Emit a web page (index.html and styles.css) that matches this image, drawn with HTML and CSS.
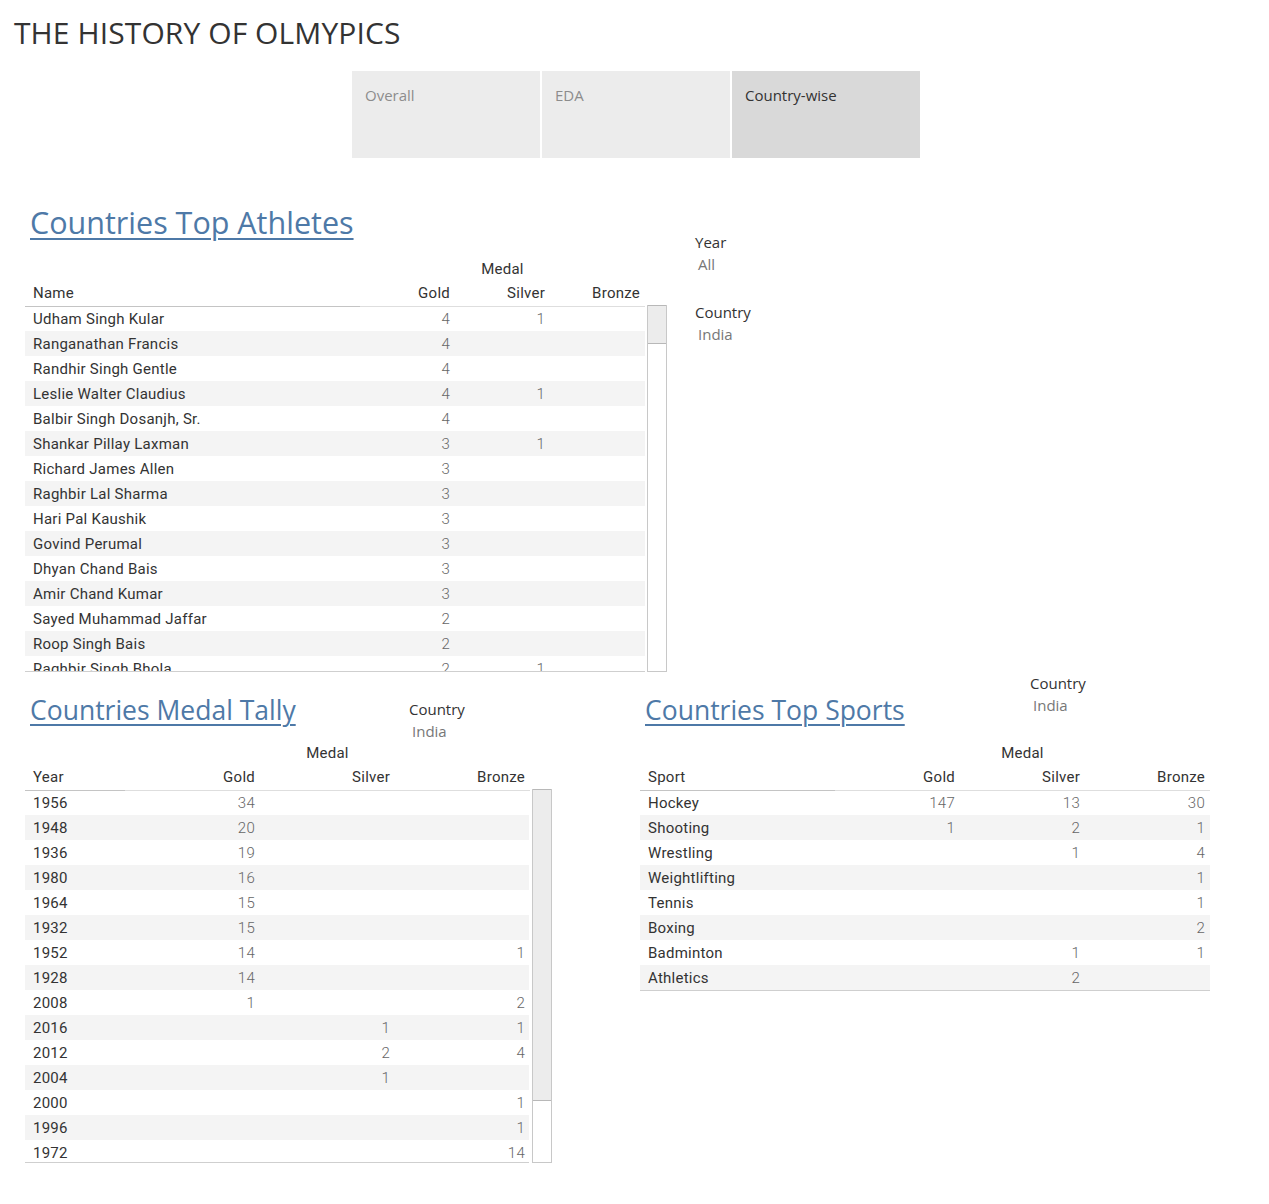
FILE: index.html
```html
<!DOCTYPE html>
<html lang="en">
<head>
<meta charset="utf-8">
<title>The History of Olympics</title>
<link rel="stylesheet" href="styles.css">
</head>
<body>
<header class="title">THE HISTORY OF OLMYPICS</header>
<nav class="tabs">
  <div class="tab">Overall</div>
  <div class="tab">EDA</div>
  <div class="tab active">Country-wise</div>
</nav>

<section class="top">
  <div class="athletes">
    <h2 class="heading big">Countries Top Athletes</h2>
    <div class="grid ath-cols medal-row"><span></span><span class="medal">Medal</span></div>
    <div class="grid ath-cols head-row">
      <span class="hc first">Name</span><span class="hc num">Gold</span><span class="hc num">Silver</span><span class="hc num">Bronze</span>
    </div>
    <div class="body-wrap">
      <div class="tbody ath-body">
        <div class="grid ath-cols row"><span class="c">Udham Singh Kular</span><span class="n">4</span><span class="n">1</span><span class="n"></span></div>
        <div class="grid ath-cols row"><span class="c">Ranganathan Francis</span><span class="n">4</span><span class="n"></span><span class="n"></span></div>
        <div class="grid ath-cols row"><span class="c">Randhir Singh Gentle</span><span class="n">4</span><span class="n"></span><span class="n"></span></div>
        <div class="grid ath-cols row"><span class="c">Leslie Walter Claudius</span><span class="n">4</span><span class="n">1</span><span class="n"></span></div>
        <div class="grid ath-cols row"><span class="c">Balbir Singh Dosanjh, Sr.</span><span class="n">4</span><span class="n"></span><span class="n"></span></div>
        <div class="grid ath-cols row"><span class="c">Shankar Pillay Laxman</span><span class="n">3</span><span class="n">1</span><span class="n"></span></div>
        <div class="grid ath-cols row"><span class="c">Richard James Allen</span><span class="n">3</span><span class="n"></span><span class="n"></span></div>
        <div class="grid ath-cols row"><span class="c">Raghbir Lal Sharma</span><span class="n">3</span><span class="n"></span><span class="n"></span></div>
        <div class="grid ath-cols row"><span class="c">Hari Pal Kaushik</span><span class="n">3</span><span class="n"></span><span class="n"></span></div>
        <div class="grid ath-cols row"><span class="c">Govind Perumal</span><span class="n">3</span><span class="n"></span><span class="n"></span></div>
        <div class="grid ath-cols row"><span class="c">Dhyan Chand Bais</span><span class="n">3</span><span class="n"></span><span class="n"></span></div>
        <div class="grid ath-cols row"><span class="c">Amir Chand Kumar</span><span class="n">3</span><span class="n"></span><span class="n"></span></div>
        <div class="grid ath-cols row"><span class="c">Sayed Muhammad Jaffar</span><span class="n">2</span><span class="n"></span><span class="n"></span></div>
        <div class="grid ath-cols row"><span class="c">Roop Singh Bais</span><span class="n">2</span><span class="n"></span><span class="n"></span></div>
        <div class="grid ath-cols row"><span class="c">Raghbir Singh Bhola</span><span class="n">2</span><span class="n">1</span><span class="n"></span></div>
      </div>
      <div class="scroll ath-scroll"><div class="thumb ath-thumb"></div></div>
    </div>
  </div>

  <aside class="filters">
    <div class="filter">
      <div class="f-label">Year</div>
      <div class="f-value">All</div>
    </div>
    <div class="filter">
      <div class="f-label">Country</div>
      <div class="f-value">India</div>
    </div>
  </aside>
</section>

<section class="bottom">
  <div class="tally">
    <div class="block-head tally-head">
      <h2 class="heading">Countries Medal Tally</h2>
      <div class="filter tally-filter">
        <div class="f-label">Country</div>
        <div class="f-value">India</div>
      </div>
    </div>
    <div class="grid tally-cols medal-row"><span></span><span class="medal">Medal</span></div>
    <div class="grid tally-cols head-row">
      <span class="hc first">Year</span><span class="hc num">Gold</span><span class="hc num">Silver</span><span class="hc num">Bronze</span>
    </div>
    <div class="body-wrap">
      <div class="tbody tally-body">
        <div class="grid tally-cols row"><span class="c">1956</span><span class="n">34</span><span class="n"></span><span class="n"></span></div>
        <div class="grid tally-cols row"><span class="c">1948</span><span class="n">20</span><span class="n"></span><span class="n"></span></div>
        <div class="grid tally-cols row"><span class="c">1936</span><span class="n">19</span><span class="n"></span><span class="n"></span></div>
        <div class="grid tally-cols row"><span class="c">1980</span><span class="n">16</span><span class="n"></span><span class="n"></span></div>
        <div class="grid tally-cols row"><span class="c">1964</span><span class="n">15</span><span class="n"></span><span class="n"></span></div>
        <div class="grid tally-cols row"><span class="c">1932</span><span class="n">15</span><span class="n"></span><span class="n"></span></div>
        <div class="grid tally-cols row"><span class="c">1952</span><span class="n">14</span><span class="n"></span><span class="n">1</span></div>
        <div class="grid tally-cols row"><span class="c">1928</span><span class="n">14</span><span class="n"></span><span class="n"></span></div>
        <div class="grid tally-cols row"><span class="c">2008</span><span class="n">1</span><span class="n"></span><span class="n">2</span></div>
        <div class="grid tally-cols row"><span class="c">2016</span><span class="n"></span><span class="n">1</span><span class="n">1</span></div>
        <div class="grid tally-cols row"><span class="c">2012</span><span class="n"></span><span class="n">2</span><span class="n">4</span></div>
        <div class="grid tally-cols row"><span class="c">2004</span><span class="n"></span><span class="n">1</span><span class="n"></span></div>
        <div class="grid tally-cols row"><span class="c">2000</span><span class="n"></span><span class="n"></span><span class="n">1</span></div>
        <div class="grid tally-cols row"><span class="c">1996</span><span class="n"></span><span class="n"></span><span class="n">1</span></div>
        <div class="grid tally-cols row"><span class="c">1972</span><span class="n"></span><span class="n"></span><span class="n">14</span></div>
      </div>
      <div class="scroll tally-scroll"><div class="thumb tally-thumb"></div></div>
    </div>
  </div>

  <div class="sports">
    <div class="block-head sports-head">
      <h2 class="heading">Countries Top Sports</h2>
      <div class="filter sports-filter">
        <div class="f-label">Country</div>
        <div class="f-value">India</div>
      </div>
    </div>
    <div class="grid sport-cols medal-row"><span></span><span class="medal">Medal</span></div>
    <div class="grid sport-cols head-row">
      <span class="hc first">Sport</span><span class="hc num">Gold</span><span class="hc num">Silver</span><span class="hc num">Bronze</span>
    </div>
    <div class="tbody sport-body">
      <div class="grid sport-cols row"><span class="c">Hockey</span><span class="n">147</span><span class="n">13</span><span class="n">30</span></div>
      <div class="grid sport-cols row"><span class="c">Shooting</span><span class="n">1</span><span class="n">2</span><span class="n">1</span></div>
      <div class="grid sport-cols row"><span class="c">Wrestling</span><span class="n"></span><span class="n">1</span><span class="n">4</span></div>
      <div class="grid sport-cols row"><span class="c">Weightlifting</span><span class="n"></span><span class="n"></span><span class="n">1</span></div>
      <div class="grid sport-cols row"><span class="c">Tennis</span><span class="n"></span><span class="n"></span><span class="n">1</span></div>
      <div class="grid sport-cols row"><span class="c">Boxing</span><span class="n"></span><span class="n"></span><span class="n">2</span></div>
      <div class="grid sport-cols row"><span class="c">Badminton</span><span class="n"></span><span class="n">1</span><span class="n">1</span></div>
      <div class="grid sport-cols row"><span class="c">Athletics</span><span class="n"></span><span class="n">2</span><span class="n"></span></div>
    </div>
  </div>
</section>
</body>
</html>
```

FILE: styles.css
```css
html, body {
  margin: 0;
  padding: 0;
  background: #ffffff;
}

body {
  color: #333333;
  font-family: Roboto, "Liberation Sans", sans-serif;
  font-size: 15px;
  letter-spacing: 0.25px;
}

.title {
  margin: 11px 0 0 14px;
  height: 44px;
  line-height: 44px;
  font-family: "Open Sans", sans-serif;
  font-size: 30px;
  letter-spacing: 0.1px;
  color: #333333;
}

.tabs {
  display: flex;
  gap: 2px;
  margin: 16px 0 0 352px;
}

.tab {
  width: 188px;
  height: 87px;
  box-sizing: border-box;
  padding: 14px 13px;
  background: #ececec;
  font-family: "Open Sans", sans-serif;
  font-size: 15px;
  letter-spacing: 0;
  line-height: 20px;
  color: #8c8c8c;
}

.tab.active {
  background: #d9d9d9;
  color: #333333;
}

.heading {
  margin: 0;
  font-family: "Open Sans", sans-serif;
  font-weight: 400;
  font-size: 26.5px;
  letter-spacing: 0;
  line-height: 38px;
  color: #4e79a7;
  text-decoration: underline;
  text-decoration-thickness: 2px;
  text-underline-offset: 4px;
  white-space: nowrap;
}

.heading.big {
  font-size: 30.5px;
}

/* ---------- top block ---------- */
.top {
  display: flex;
  align-items: flex-start;
}

.athletes {
  margin-left: 25px;
  width: 642px;
}

.athletes .heading {
  margin: 45px 0 0 5px;
}

.grid {
  display: grid;
}

.ath-cols { grid-template-columns: 335px 95px 95px 95px; width: 620px; }
.tally-cols { grid-template-columns: 100px 135px 135px 135px; width: 505px; }
.sport-cols { grid-template-columns: 195px 125px 125px 125px; width: 570px; }

.medal-row {
  height: 25px;
  line-height: 26px;
}

.athletes .medal-row {
  margin-top: 15px;
}

.medal {
  grid-column: 2 / 5;
  text-align: center;
  color: #333333;
}

.head-row {
  height: 25px;
  line-height: 25px;
}

.hc {
  border-bottom: 1px solid #dedede;
  color: #333333;
}

.hc.first {
  padding-left: 8px;
  border-bottom-color: #c4c4c4;
}

.hc.num {
  text-align: right;
  padding-right: 5px;
}

.body-wrap {
  display: flex;
  align-items: flex-start;
}

.tbody {
  overflow: hidden;
  box-sizing: border-box;
  border-bottom: 1px solid #cfcfcf;
}

.ath-body {
  width: 620px;
  height: 366px;
}

.tally-body {
  width: 505px;
  height: 373px;
}

.row {
  height: 25px;
  line-height: 26px;
}

.row:nth-child(even) {
  background: #f4f4f4;
}

.c {
  padding-left: 8px;
  color: #333333;
  white-space: nowrap;
}

.n {
  text-align: right;
  padding-right: 5px;
  color: #666666;
  font-weight: 300;
}

.scroll {
  width: 20px;
  box-sizing: border-box;
  border: 1px solid #c8c8c8;
  border-top: none;
  background: #ffffff;
}

.thumb {
  background: #ececec;
  border-top: 1px solid #b8b8b8;
  border-bottom: 1px solid #b8b8b8;
  box-sizing: border-box;
}

.ath-scroll {
  margin: -1px 0 0 2px;
  height: 367px;
}

.ath-thumb {
  height: 39px;
}

.tally-scroll {
  margin: -1px 0 0 3px;
  height: 374px;
}

.tally-thumb {
  height: 312px;
}

.filters {
  margin: 73px 0 0 28px;
}

.filter + .filter {
  margin-top: 26px;
}

.f-label {
  font-family: "Open Sans", sans-serif;
  font-size: 15px;
  letter-spacing: 0;
  line-height: 22px;
  color: #333333;
}

.f-value {
  padding-left: 3px;
  font-family: "Open Sans", sans-serif;
  font-size: 15px;
  letter-spacing: 0;
  line-height: 22px;
  color: #777777;
}

/* ---------- bottom block ---------- */
.bottom {
  display: flex;
  align-items: flex-start;
}

.tally {
  margin-left: 25px;
  width: 527px;
}

.sports {
  margin-left: 88px;
  width: 570px;
}

.block-head {
  display: grid;
  height: 68px;
  align-items: start;
}

.tally-head { grid-template-columns: 384px auto; }
.sports-head { grid-template-columns: 390px auto; }

.block-head .heading {
  margin: 19px 0 0 5px;
}

.tally-filter {
  margin-top: 26px;
}

.sports-filter {
  margin-top: 0;
}

.sport-body {
  width: 570px;
}
```
